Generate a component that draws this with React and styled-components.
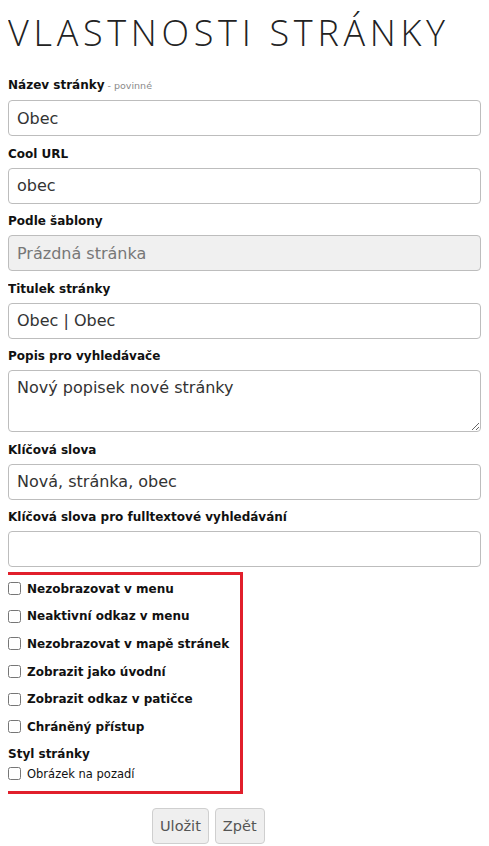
import React from "react";
import styled, { createGlobalStyle } from "styled-components";

const Global = createGlobalStyle`
  html, body { background: #fff; }
  body {
    margin: 8px;
    font-family: "DejaVu Sans", Verdana, sans-serif;
    color: #111;
  }
  * { box-sizing: border-box; }
`;

const Title = styled.h1`
  margin: 0;
  font-family: "Open Sans", "DejaVu Sans", sans-serif;
  font-weight: 300;
  font-size: 36px;
  line-height: 46px;
  letter-spacing: 4.7px;
  color: #222;
  padding: 2px 0 20px;
  white-space: nowrap;
`;

const Fields = styled.div`
  display: flex;
  flex-direction: column;
  gap: 8.5px;
`;

const Field = styled.div`
  display: flex;
  flex-direction: column;
`;

const Label = styled.label`
  font-size: 12px;
  font-weight: bold;
  line-height: 18px;
  margin-bottom: 5px;
  color: #111;
`;

const Hint = styled.span`
  font-weight: normal;
  font-size: 9.5px;
  color: #8a8a8a;
`;

const Input = styled.input`
  display: block;
  width: 100%;
  height: 36px;
  border: 1px solid #bdbdbd;
  border-radius: 4px;
  padding: 0 8px;
  font-family: "DejaVu Sans", Verdana, sans-serif;
  font-size: 16px;
  color: #333;
  background: ${(p) => (p.disabled ? "#f0f0f0" : "#fff")};
  &:disabled { color: #777; }
  outline: none;
`;

const TextArea = styled.textarea`
  display: block;
  width: 100%;
  height: 62px;
  border: 1px solid #bdbdbd;
  border-radius: 4px;
  padding: 6px 8px;
  font-family: "DejaVu Sans", Verdana, sans-serif;
  font-size: 16px;
  line-height: 22px;
  color: #333;
  resize: vertical;
  outline: none;
`;

const Box = styled.div`
  margin: 5px 0 14px -6px;
  width: 241px;
  border: 3px solid #e11f2b;
  padding: 0 0 6px 3px;
`;

const CheckRow = styled.label`
  display: flex;
  align-items: center;
  height: 27.6px;
  font-size: 12px;
  font-weight: ${(p) => (p.light ? "normal" : "bold")};
  color: #111;
  ${(p) => p.light && "height: 22px; font-size: 11.5px;"}
`;

const Check = styled.input.attrs({ type: "checkbox" })`
  width: 13px;
  height: 13px;
  margin: 0 6px 0 0;
`;

const SubTitle = styled.div`
  font-size: 12px;
  font-weight: bold;
  line-height: 18px;
  margin-top: 4px;
`;

const Buttons = styled.div`
  display: flex;
  gap: 6px;
  padding-left: 144px;
`;

const Button = styled.button`
  height: 36px;
  padding: 0 7px;
  border: 1px solid #cfcfcf;
  border-radius: 4px;
  background: #efefef;
  font-family: "DejaVu Sans", Verdana, sans-serif;
  font-size: 14.5px;
  color: #555;
`;

const fields = [
  { label: "Název stránky", hint: "povinné", value: "Obec" },
  { label: "Cool URL", value: "obec" },
  { label: "Podle šablony", value: "Prázdná stránka", disabled: true },
  { label: "Titulek stránky", value: "Obec | Obec" },
  { label: "Popis pro vyhledávače", value: "Nový popisek nové stránky", area: true },
  { label: "Klíčová slova", value: "Nová, stránka, obec" },
  { label: "Klíčová slova pro fulltextové vyhledávání", value: "" },
];

const checks = [
  "Nezobrazovat v menu",
  "Neaktivní odkaz v menu",
  "Nezobrazovat v mapě stránek",
  "Zobrazit jako úvodní",
  "Zobrazit odkaz v patičce",
  "Chráněný přístup",
];

export default function App() {
  return (
    <>
      <Global />
      <Title>VLASTNOSTI STRÁNKY</Title>
      <Fields>
        {fields.map((f) => (
          <Field key={f.label}>
            <Label>
              {f.label}
              {f.hint && <Hint> - {f.hint}</Hint>}
            </Label>
            {f.area ? (
              <TextArea defaultValue={f.value} />
            ) : (
              <Input defaultValue={f.value} disabled={f.disabled} />
            )}
          </Field>
        ))}
      </Fields>
      <Box>
        {checks.map((c) => (
          <CheckRow key={c}>
            <Check />
            {c}
          </CheckRow>
        ))}
        <SubTitle>Styl stránky</SubTitle>
        <CheckRow light>
          <Check />
          Obrázek na pozadí
        </CheckRow>
      </Box>
      <Buttons>
        <Button>Uložit</Button>
        <Button>Zpět</Button>
      </Buttons>
    </>
  );
}
